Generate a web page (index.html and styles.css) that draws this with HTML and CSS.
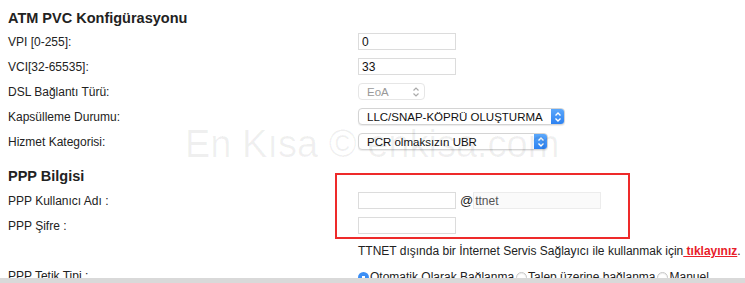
FILE: index.html
```html
<!DOCTYPE html>
<html lang="tr">
<head>
    <meta charset="UTF-8">
    <title>ATM PVC Konfigürasyonu</title>
    <link rel="stylesheet" href="styles.css">
</head>
<body>
    <div class="page">
        <h2 class="section-title first">ATM PVC Konfigürasyonu</h2>

        <div class="row">
            <label>VPI [0-255]:</label>
            <div class="field"><input type="text" class="text-input" value="0"></div>
        </div>
        <div class="row">
            <label>VCI[32-65535]:</label>
            <div class="field"><input type="text" class="text-input" value="33"></div>
        </div>
        <div class="row">
            <label>DSL Bağlantı Türü:</label>
            <div class="field">
                <div class="select disabled small">
                    <span class="select-text">EoA</span>
                    <span class="select-arrows">
                        <svg width="10" height="14" viewBox="0 0 10 14"><path d="M2.5 5.5 L5 3 L7.5 5.5 M2.5 8.5 L5 11 L7.5 8.5" fill="none" stroke="#aaa" stroke-width="1.2"/></svg>
                    </span>
                </div>
            </div>
        </div>
        <div class="row">
            <label>Kapsülleme Durumu:</label>
            <div class="field">
                <div class="select wide">
                    <span class="select-text">LLC/SNAP-KÖPRÜ OLUŞTURMA</span>
                    <span class="select-button">
                        <svg width="10" height="14" viewBox="0 0 10 14"><path d="M2.5 5.5 L5 3 L7.5 5.5 M2.5 8.5 L5 11 L7.5 8.5" fill="none" stroke="#fff" stroke-width="1.4"/></svg>
                    </span>
                </div>
            </div>
        </div>
        <div class="row">
            <label>Hizmet Kategorisi:</label>
            <div class="field">
                <div class="select medium">
                    <span class="select-text">PCR olmaksızın UBR</span>
                    <span class="select-button">
                        <svg width="10" height="14" viewBox="0 0 10 14"><path d="M2.5 5.5 L5 3 L7.5 5.5 M2.5 8.5 L5 11 L7.5 8.5" fill="none" stroke="#fff" stroke-width="1.4"/></svg>
                    </span>
                </div>
            </div>
        </div>

        <h2 class="section-title">PPP Bilgisi</h2>

        <div class="row">
            <label>PPP Kullanıcı Adı :</label>
            <div class="field">
                <input type="text" class="text-input">
                <span class="at">@</span>
                <input type="text" class="text-input domain" value="ttnet" readonly>
            </div>
        </div>
        <div class="row">
            <label>PPP Şifre :</label>
            <div class="field"><input type="password" class="text-input"></div>
        </div>
        <div class="row">
            <span></span>
            <div class="note">TTNET dışında bir İnternet Servis Sağlayıcı ile kullanmak için<a href="#" class="note-link">&nbsp;tıklayınız</a>.</div>
        </div>
        <div class="row">
            <label>PPP Tetik Tipi :</label>
            <div class="field radios">
                <span class="radio checked"></span><span class="radio-label">Otomatik Olarak Bağlanma</span>
                <span class="radio"></span><span class="radio-label">Talep üzerine bağlanma</span>
                <span class="radio"></span><span class="radio-label">Manuel</span>
            </div>
        </div>

        <div class="watermark">En Kısa © enkisa.com</div>
        <div class="highlight"></div>
    </div>
    <div class="bottom-bar"></div>
</body>
</html>
```

FILE: styles.css
```css
body {
    font-family: "Liberation Sans", Arial, sans-serif;
    font-size: 12px;
    color: #222;
    background-color: #fff;
    margin: 0;
    padding: 0;
    overflow: hidden;
}

.page {
    position: relative;
    padding: 0 8px;
}

.section-title {
    font-size: 14.5px;
    font-weight: bold;
    line-height: 20px;
    margin: 0;
    padding: 12px 0 2px;
}

.section-title.first {
    padding: 8px 0 1px;
}

.row {
    display: grid;
    grid-template-columns: 350px 1fr;
    align-items: center;
    height: 25px;
}

.field {
    display: flex;
    align-items: center;
}

.text-input {
    width: 98px;
    height: 17px;
    box-sizing: border-box;
    border: 1px solid #dcdcdc;
    padding: 0 3px;
    margin: 0;
    font-family: inherit;
    font-size: 12px;
    color: #111;
    background-color: #fff;
    outline: none;
}

.text-input.domain {
    width: 128px;
    padding-left: 1px;
    background-color: #fafafa;
    border-color: #ececec;
    color: #555;
}

.at {
    font-size: 13px;
    margin: 0 0 0 4px;
    color: #222;
}

.select {
    display: flex;
    align-items: center;
    height: 17px;
    box-sizing: border-box;
    border: 1px solid #d4d4d4;
    border-radius: 4px;
    background-color: #fff;
    box-shadow: 0 1px 1px rgba(0, 0, 0, 0.08);
    font-size: 11.5px;
    color: #111;
    overflow: hidden;
}

.select.small {
    width: 67px;
}

.select.wide {
    width: 207px;
}

.select.medium {
    width: 190px;
}

.select.disabled {
    border-color: #e6e6e6;
    box-shadow: none;
    color: #999;
}

.select-text {
    flex: 1;
    padding-left: 8px;
    white-space: nowrap;
}

.select-arrows {
    display: flex;
    padding-right: 3px;
}

.select-button {
    display: flex;
    align-items: center;
    justify-content: center;
    width: 14px;
    height: 17px;
    margin: -1px -1px -1px 0;
    background: linear-gradient(#5eaafc, #2a7ff0);
    border-radius: 0 4px 4px 0;
}

.note {
    white-space: nowrap;
    padding-top: 1px;
}

.note-link {
    color: #e8202a;
    font-weight: bold;
    text-decoration: underline;
}

.radios {
    white-space: nowrap;
    padding-top: 3px;
}

.radio {
    display: inline-block;
    width: 11px;
    height: 11px;
    box-sizing: border-box;
    border: 1px solid #c8c8c8;
    border-radius: 50%;
    background-color: #fff;
    box-shadow: inset 0 1px 1px rgba(0, 0, 0, 0.08);
    margin: 0 0 0 2px;
}

.radio:first-child {
    margin-left: 0;
}

.radio.checked {
    border: none;
    background: radial-gradient(circle, #fff 0 1.6px, #3b8ef5 2px);
    box-shadow: none;
}

.radio-label {
    margin-left: 1px;
}

.radios + label,
.row label {
    padding-top: 0;
}

.watermark {
    position: absolute;
    left: 185px;
    top: 125px;
    font-size: 38px;
    line-height: 1;
    color: rgba(0, 0, 0, 0.06);
    white-space: nowrap;
    pointer-events: none;
}

.highlight {
    position: absolute;
    left: 335px;
    top: 173px;
    width: 295px;
    height: 66px;
    box-sizing: border-box;
    border: 2px solid #ee2a2a;
    pointer-events: none;
}

.bottom-bar {
    position: fixed;
    left: 0;
    right: 0;
    bottom: 0;
    height: 5px;
    background-color: #d9d9d9;
}
```
